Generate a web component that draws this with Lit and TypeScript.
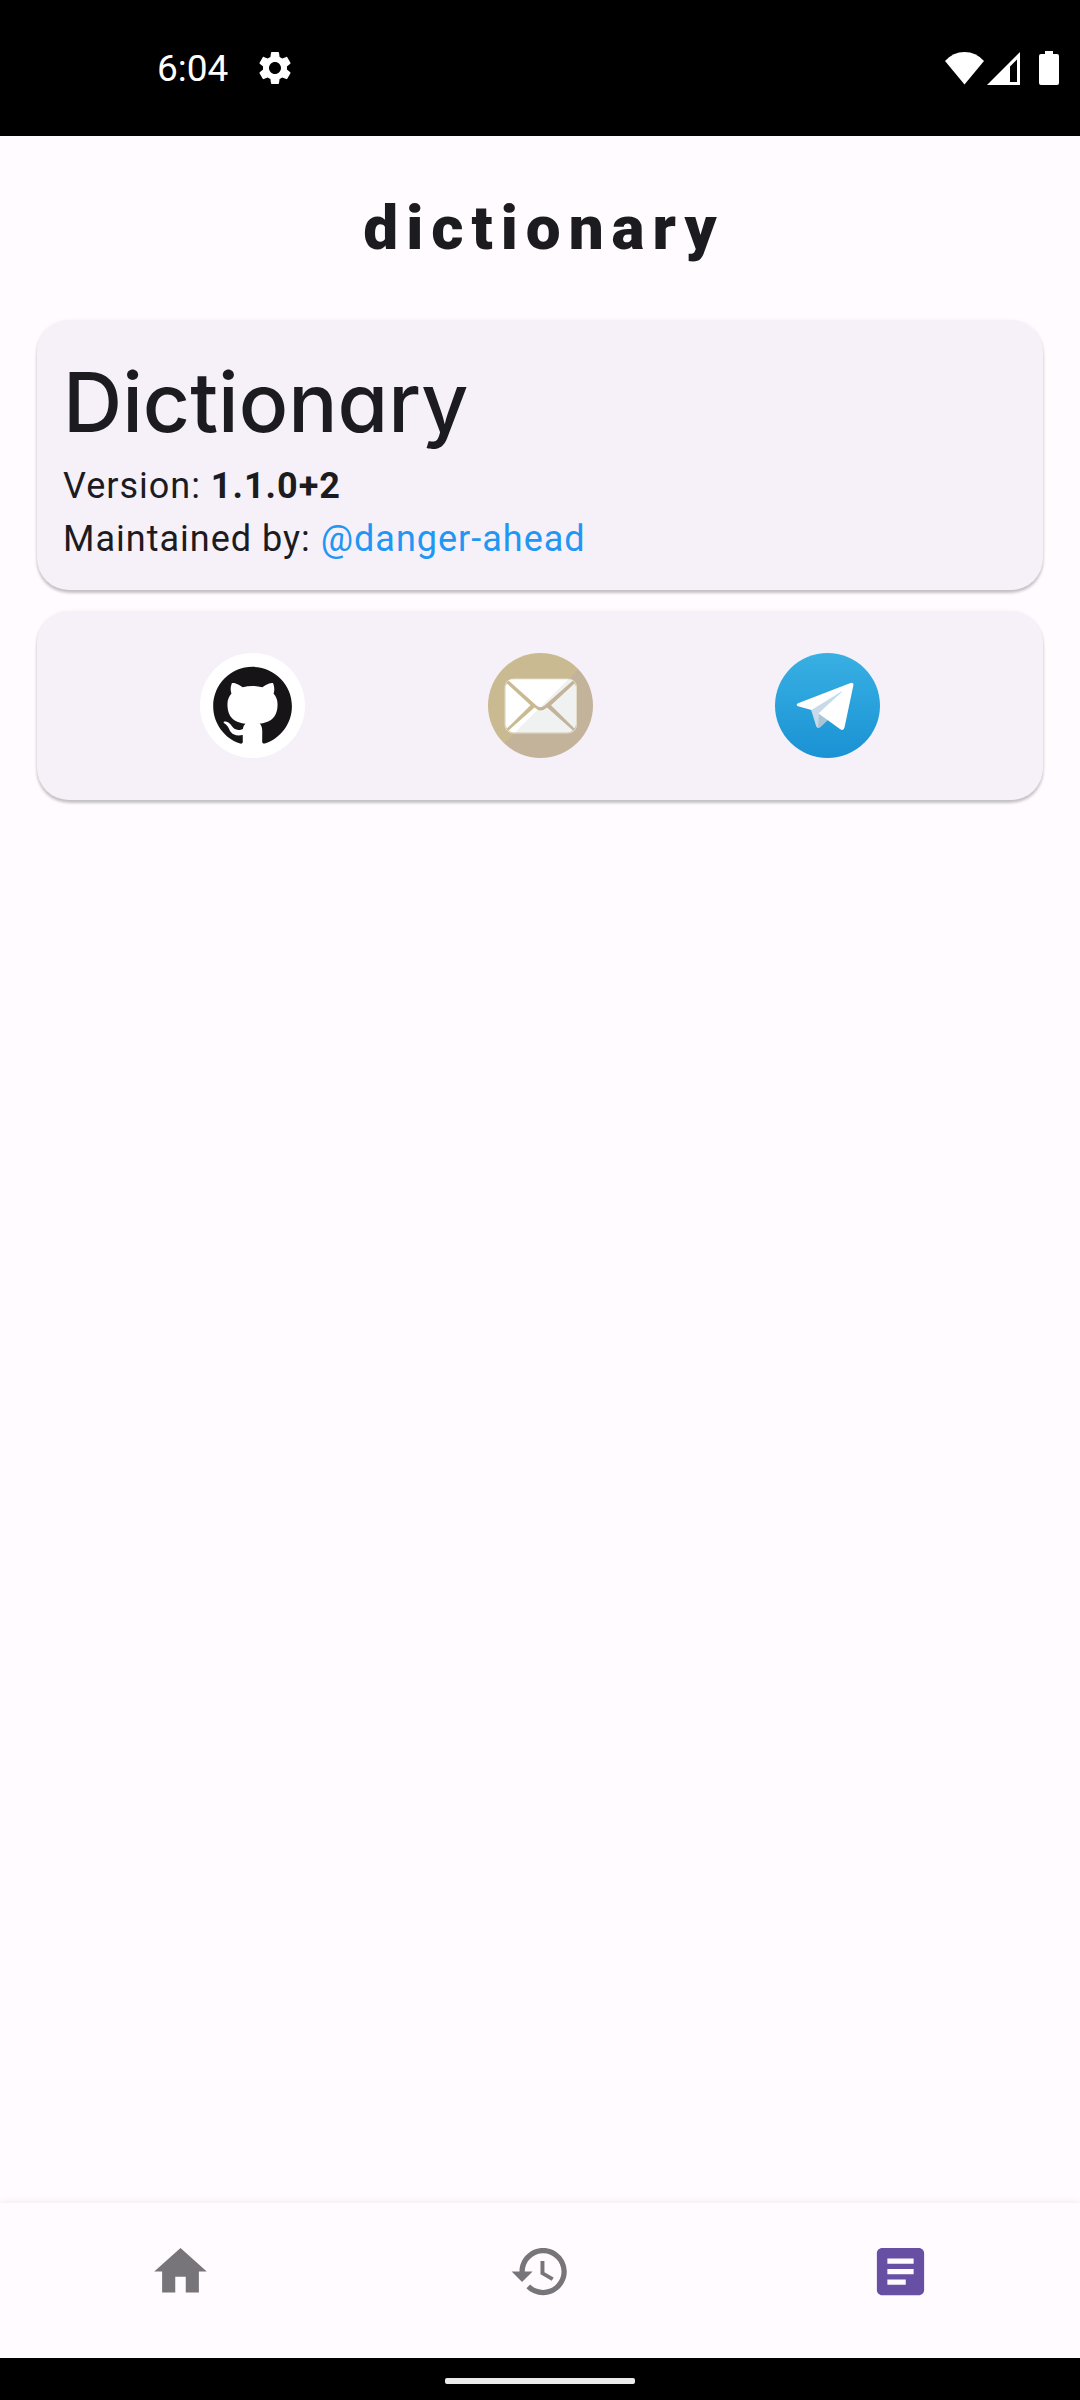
import { LitElement, html, css, svg } from "lit";
import { customElement, property } from "lit/decorators.js";

const icons = {
  home: svg`<path d="M10 20v-6h4v6h5v-8h3L12 3 2 12h3v8z"/>`,
  history: svg`<path d="M13 3c-4.97 0-9 4.03-9 9H1l3.89 3.89.07.14L9 12H6c0-3.87 3.13-7 7-7s7 3.13 7 7-3.13 7-7 7c-1.93 0-3.68-.79-4.94-2.06l-1.42 1.42C8.27 19.99 10.51 21 13 21c4.97 0 9-4.03 9-9s-4.03-9-9-9zm-1 5v5l4.28 2.54.72-1.21-3.5-2.08V8H12z"/>`,
  about: svg`<path d="M19 3H5c-1.1 0-2 .9-2 2v14c0 1.100.9 2 2 2h14c1.100 0 2-.9 2-2V5c0-1.100-.9-2-2-2zm-5 14H7v-2h7v2zm3-4H7v-2h10v2zm0-4H7V7h10v2z"/>`,
};

@customElement("status-bar")
class StatusBar extends LitElement {
  static styles = css`
    :host {
      display: flex;
      align-items: center;
      justify-content: space-between;
      height: 136px;
      padding: 0 21px 0 157px;
      box-sizing: border-box;
      background: #000;
      color: #fff;
      font: 400 37px/44px Roboto, sans-serif;
      letter-spacing: normal;
    }
    .side { display: flex; align-items: center; gap: 27px; }
    .side time { padding-top: 2px; }
    .signals { display: flex; align-items: center; gap: 3px; }
    .gear { width: 40px; height: 40px; }
    .wifi { width: 39px; height: 34px; }
    .cell { width: 33px; height: 34px; }
    .battery { width: 20px; height: 34px; margin-left: 16px; }
    svg { display: block; fill: currentColor; }
  `;
  render() {
    return html`
      <div class="side">
        <time>6:04</time>
        <svg class="gear" viewBox="0 0 24 24" aria-hidden="true">
          <path d="M19.140 12.940c.04-.3.060-.61.060-.94 0-.32-.02-.64-.07-.94l2.030-1.580c.18-.14.23-.41.12-.61l-1.920-3.320c-.12-.22-.37-.29-.59-.22l-2.390.96c-.5-.38-1.030-.7-1.620-.94l-.36-2.540c-.04-.24-.24-.41-.48-.41h-3.840c-.24 0-.43.17-.47.41l-.36 2.540c-.59.24-1.130.57-1.620.94l-2.390-.96c-.22-.08-.47 0-.59.22L2.740 8.870c-.12.210-.08.470.12.610l2.030 1.580c-.05.3-.09.630-.09.940s.02.640.07.940l-2.030 1.580c-.18.140-.23.410-.12.610l1.920 3.320c.12.220.37.290.59.220l2.390-.96c.5.380 1.030.7 1.620.94l.36 2.540c.05.240.24.410.48.410h3.840c.24 0 .44-.17.47-.41l.36-2.540c.59-.24 1.130-.56 1.620-.94l2.390.96c.22.080.47 0 .59-.22l1.920-3.320c.12-.22.07-.47-.12-.61l-2.010-1.580zM12 15.600c-1.980 0-3.600-1.620-3.600-3.600s1.620-3.600 3.600-3.600 3.600 1.620 3.600 3.600-1.620 3.600-3.600 3.600z"/>
        </svg>
      </div>
      <div class="signals">
        <svg class="wifi" viewBox="0 0 39 34" aria-hidden="true"><path d="M0 10Q8 1 19.500 1T39 10L19.500 33.500Z"/></svg>
        <svg class="cell" viewBox="0 0 33 34" aria-hidden="true"><path fill-rule="evenodd" d="M33 1V34H0ZM30 8.500L23 15.500V31H30Z"/></svg>
        <svg class="battery" viewBox="0 0 20 34" aria-hidden="true"><path d="M6 0h8v3h4q2 0 2 2v27q0 2-2 2H2q-2 0-2-2V5q0-2 2-2h4z"/></svg>
      </div>
    `;
  }
}

@customElement("contact-links")
class ContactLinks extends LitElement {
  static styles = css`
    :host { display: flex; justify-content: space-evenly; }
    .link {
      display: grid;
      place-items: center;
      width: 144px;
      height: 144px;
      border-radius: 50%;
    }
    svg { display: block; width: 105px; height: 105px; }
  `;
  render() {
    return html`
      <a class="link" href="#github" aria-label="GitHub">
        <svg viewBox="0 0 105 105" aria-hidden="true">
          <circle cx="52.5" cy="52.5" r="52.5" fill="#fff"/>
          <path fill="#161416" transform="translate(13.2 12.9) scale(3.28)" d="M12 .297c-6.630 0-12 5.373-12 12 0 5.303 3.438 9.800 8.205 11.385.6.113.82-.258.82-.577 0-.285-.01-1.040-.015-2.040-3.338.724-4.042-1.610-4.042-1.610C4.422 18.070 3.633 17.700 3.633 17.700c-1.087-.744.084-.729.084-.729 1.205.084 1.838 1.236 1.838 1.236 1.070 1.835 2.809 1.305 3.495.998.108-.776.417-1.305.76-1.605-2.665-.3-5.466-1.332-5.466-5.930 0-1.310.465-2.380 1.235-3.220-.135-.303-.54-1.523.105-3.176 0 0 1.005-.322 3.300 1.230.96-.267 1.980-.399 3-.405 1.020.006 2.040.138 3 .405 2.280-1.552 3.285-1.230 3.285-1.230.645 1.653.24 2.873.12 3.176.765.840 1.230 1.910 1.230 3.220 0 4.610-2.805 5.625-5.475 5.920.42.360.81 1.096.81 2.220 0 1.606-.015 2.896-.015 3.286 0 .315.210.690.825.570C20.565 22.092 24 17.592 24 12.297c0-6.627-5.373-12-12-12"/>
        </svg>
      </a>
      <a class="link" href="#email" aria-label="Email">
        <svg viewBox="0 0 105 105" aria-hidden="true">
          <defs>
            <linearGradient id="sand" gradientUnits="userSpaceOnUse" x1="0" y1="0" x2="107" y2="107">
              <stop offset=".5" stop-color="#c9ba92"/><stop offset=".5" stop-color="#c2b39a"/>
            </linearGradient>
            <linearGradient id="paper" gradientUnits="userSpaceOnUse" x1="0" y1="0" x2="107" y2="107">
              <stop offset=".5" stop-color="#fff"/><stop offset=".5" stop-color="#f0f2f2"/>
            </linearGradient>
          </defs>
          <circle cx="52.5" cy="52.5" r="52.5" fill="url(#sand)"/>
          <rect x="17" y="26" width="71.500" height="54" rx="8" fill="none" stroke="#e4dcc8" stroke-width="1"/>
          <g fill="url(#paper)">
            <path d="M20.500 27.500Q23 26.300 26 26.300H79.500Q82.500 26.300 85 27.500L56.500 52.500Q52.500 56 48.500 52.500Z"/>
            <path d="M19 30.500L42.500 52.300L19 75.500Q17.500 73.500 17.500 71V35Q17.500 32.500 19 30.500Z"/>
            <path d="M86.500 30.500L63 52.300L86.500 75.500Q88 73.500 88 71V35Q88 32.500 86.500 30.500Z"/>
            <path d="M20.500 77.500L46.500 54.500Q52.500 60.500 59 54.500L85 77.500Q82.500 79.500 79.500 79.500H26Q23 79.500 20.500 77.500Z"/>
          </g>
        </svg>
      </a>
      <a class="link" href="#telegram" aria-label="Telegram">
        <svg viewBox="0 0 105 105" aria-hidden="true">
          <defs>
            <linearGradient id="sky" x1="0" y1="0" x2="0" y2="1">
              <stop offset="0" stop-color="#38b0e3"/><stop offset="1" stop-color="#1a92d4"/>
            </linearGradient>
          </defs>
          <circle cx="52.5" cy="52.5" r="52.5" fill="url(#sky)"/>
          <path fill="#c8daea" d="M36 56.500L68 37L45 60L43.500 75Q41.800 75 41.200 73.200Z"/>
          <path fill="#a9c6d8" d="M44 60L53 67L45 74.500Q44 75.300 43 74.800Z"/>
          <path fill="#fff" d="M23 50.300L75.500 30Q79 29 78.400 32.300L69.500 74.500Q68.500 78.300 65.300 76.300L43.500 60.500L67.300 38L36.500 57L23 53.200Q20.300 51.800 23 50.300Z"/>
        </svg>
      </a>
    `;
  }
}

@customElement("tab-bar")
class TabBar extends LitElement {
  static styles = css`
    :host {
      display: flex;
      height: 155px;
      background: #fffbff;
      box-shadow: 0 -2px 6px rgba(0, 0, 0, 0.06);
    }
    .tab {
      flex: 1;
      display: grid;
      place-items: center;
      margin: 0;
      padding: 0 0 18px;
      border: 0;
      background: none;
      color: #777579;
      cursor: pointer;
    }
    .tab[aria-current="page"] { color: #6750a4; }
    svg { display: block; width: 63px; height: 63px; fill: currentColor; }
  `;
  @property() current = "about";
  private tabs: { id: keyof typeof icons; label: string }[] = [
    { id: "home", label: "Home" },
    { id: "history", label: "History" },
    { id: "about", label: "About" },
  ];
  render() {
    return this.tabs.map(
      (t) => html`<button
        class="tab"
        type="button"
        aria-label=${t.label}
        aria-current=${t.id === this.current ? "page" : "false"}
        @click=${() => (this.current = t.id)}
      ><svg viewBox="0 0 24 24" aria-hidden="true">${icons[t.id]}</svg></button>`
    );
  }
}

@customElement("app-root")
class AppRoot extends LitElement {
  static styles = css`
    :host {
      display: flex;
      flex-direction: column;
      min-height: 100vh;
      background: #fffbff;
      color: #1c1b1f;
      font: 400 36px/53px Roboto, sans-serif;
      letter-spacing: 1px;
    }
    .app-title {
      margin: 0;
      padding: 56px 0 56px 8px;
      text-align: center;
      font: 900 62px/72px Roboto, sans-serif;
      letter-spacing: 8px;
    }
    .content {
      flex: 1;
      display: flex;
      flex-direction: column;
      gap: 21px;
      padding: 0 37px;
    }
    .card {
      border-radius: 32px;
      background: #f6f1f8;
      box-shadow: 0 3px 3px rgba(0, 0, 0, 0.2), 0 1px 4px rgba(0, 0, 0, 0.08);
    }
    .about { padding: 26px 26px 24px; }
    .contacts { padding: 22px 0 23px; }
    .name {
      margin: 0;
      font: 500 82px/114px Inter, sans-serif;
      font-feature-settings: "cv11";
      letter-spacing: 0;
    }
    .line { margin: 0; }
    .version { font-weight: 700; }
    .maintainer { color: #2196f3; text-decoration: none; }
    .gesture {
      display: grid;
      place-items: center;
      box-sizing: border-box;
      height: 42px;
      padding-top: 4px;
      background: #000;
    }
    .handle { width: 190px; height: 6px; border-radius: 2px; background: #ebebeb; }
  `;
  render() {
    return html`
      <status-bar></status-bar>
      <h1 class="app-title">dictionary</h1>
      <main class="content">
        <section class="card about">
          <h2 class="name">Dictionary</h2>
          <p class="line">Version: <span class="version">1.1.0+2</span></p>
          <p class="line">Maintained by: <a class="maintainer" href="#maintainer">@danger-ahead</a></p>
        </section>
        <section class="card contacts"><contact-links></contact-links></section>
      </main>
      <tab-bar></tab-bar>
      <div class="gesture"><div class="handle"></div></div>
    `;
  }
}
